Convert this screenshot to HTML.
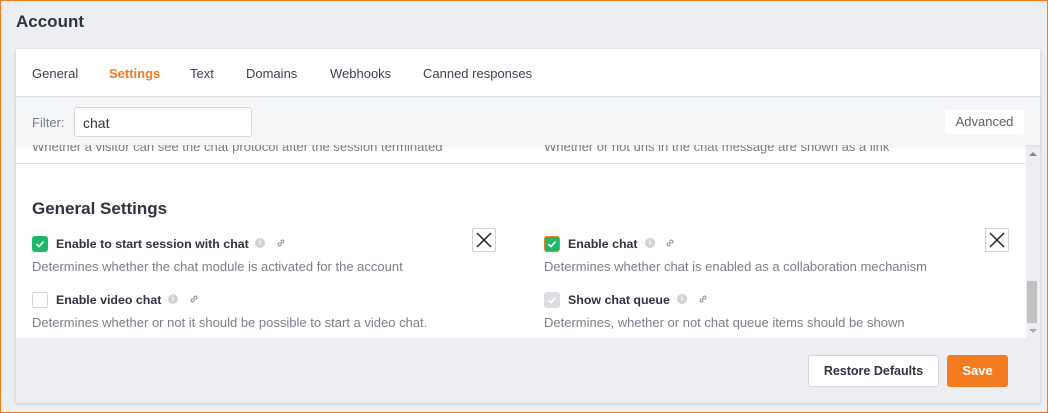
<!DOCTYPE html>
<html><head><meta charset="utf-8"><style>
*{box-sizing:border-box;margin:0;padding:0}
body{width:1048px;height:413px;background:#eceef1;font-family:"Liberation Sans",sans-serif;position:relative;overflow:hidden;color:#2e3440}
.frame{position:absolute;left:0;top:0;width:1048px;height:413px;border:1px solid #f47b20;pointer-events:none}
.a{position:absolute;white-space:nowrap}
.card{position:absolute;left:16px;top:49px;width:1024px;height:354px;background:#eceef1;box-shadow:0 1px 3px rgba(0,0,0,.15)}
.tab{font-size:13px;color:#3b4250;top:66px}
.desc{font-size:13px;color:#7a808a}
.lbl{font-size:12.4px;font-weight:bold;color:#2e3440;top:237px}
.cb{position:absolute;width:16px;height:16px;border-radius:3px}
.chk{background:#1fb86a}
.info{position:absolute;width:10px;height:10px;border-radius:50%;background:#cfd3d8;color:#fff;font-size:8px;text-align:center;line-height:10px;font-weight:bold}
.lk{position:absolute}
.x{position:absolute;width:24px;height:24px;border:1px solid #cfd3d8;border-radius:2px;background:#fff}
</style></head><body>
<div class="a" style="left:16px;top:12px;font-size:17px;font-weight:bold;color:#2e3440">Account</div>
<div class="card">
 <div style="position:absolute;left:0;top:0;width:1024px;height:48px;background:#fff;border-bottom:1px solid #dde0e4"></div>
 <div style="position:absolute;left:0;top:96px;width:1010px;height:193px;background:#fff;overflow:hidden">
  <div style="position:absolute;left:0;top:18px;width:1010px;border-top:1px solid #dde0e4"></div>
 </div>
 <div style="position:absolute;left:1010px;top:96px;width:14px;height:193px;background:#eceef1"></div>
 <div style="position:absolute;left:1011px;top:232px;width:10px;height:42px;background:#c1c1c1"></div>
</div>
<div class="a tab" style="left:32px">General</div>
<div class="a tab" style="left:109px;color:#f47b20;font-weight:bold">Settings</div>
<div class="a tab" style="left:190px">Text</div>
<div class="a tab" style="left:246px">Domains</div>
<div class="a tab" style="left:330px">Webhooks</div>
<div class="a tab" style="left:423px">Canned responses</div>
<div class="a desc" style="left:32px;top:139px;z-index:1;clip-path:inset(6px 0 0 0)">Whether a visitor can see the chat protocol after the session terminated</div>
<div class="a desc" style="left:544px;top:139px;z-index:1;clip-path:inset(6px 0 0 0)">Whether or not urls in the chat message are shown as a link</div>
<div style="position:absolute;left:16px;top:98px;width:1024px;height:47px;background:#f5f6f8;z-index:3;box-shadow:0 2px 3px rgba(0,0,0,.06)"></div>
<div class="a" style="left:32px;top:115px;font-size:13px;color:#7a808a;z-index:4">Filter:</div>
<div style="position:absolute;left:74px;top:107px;width:178px;height:30px;background:#fff;border:1px solid #d5d9de;border-radius:3px;z-index:4;font-size:14px;padding:7px 8px">chat</div>
<div style="position:absolute;left:945px;top:110px;width:79px;height:24px;background:#fff;border-radius:2px;z-index:4;font-size:13px;color:#5a606b;text-align:center;line-height:24px">Advanced</div>
<div style="position:absolute;left:1029px;top:152px;border:4px solid transparent;border-bottom:4px solid #888;border-top:0;width:0"></div>
<div style="position:absolute;left:1029px;top:329px;border:4px solid transparent;border-top:4px solid #aaa;border-bottom:0;width:0"></div>
<div class="a" style="left:32px;top:199px;font-size:17px;font-weight:bold">General Settings</div>

<div class="cb chk" style="left:32px;top:236px"><svg width="16" height="16"><path d="M4.5 8.2l2.5 2.4 4.5-5" stroke="#fff" stroke-width="1.6" fill="none"/></svg></div>
<div class="a lbl" style="left:56px">Enable to start session with chat</div>
<div class="info" style="left:255px;top:238px">i</div>
<svg class="lk" style="left:276px;top:238px" width="10" height="10"><path d="M4 6l2-2M3.5 4.5l-1 1a1.4 1.4 0 0 0 2 2l1-1M6.5 5.5l1-1a1.4 1.4 0 0 0-2-2l-1 1" stroke="#8a9099" stroke-width="1.1" fill="none"/></svg>
<div class="a desc" style="left:32px;top:259px">Determines whether the chat module is activated for the account</div>
<div class="x" style="left:472px;top:228px"><svg width="22" height="22"><path d="M4 4l14 14M18 4L4 18" stroke="#222" stroke-width="1.5"/></svg></div>

<div class="cb" style="left:32px;top:292px;border:1px solid #cfd3d8;background:#fff"></div>
<div class="a lbl" style="left:56px;top:293px">Enable video chat</div>
<div class="info" style="left:168px;top:294px">i</div>
<svg class="lk" style="left:189px;top:294px" width="10" height="10"><path d="M4 6l2-2M3.5 4.5l-1 1a1.4 1.4 0 0 0 2 2l1-1M6.5 5.5l1-1a1.4 1.4 0 0 0-2-2l-1 1" stroke="#8a9099" stroke-width="1.1" fill="none"/></svg>
<div class="a desc" style="left:32px;top:315px">Determines whether or not it should be possible to start a video chat.</div>

<div class="cb chk" style="left:544px;top:236px;border:1.5px solid #f47b20"><svg width="14" height="14"><path d="M3.5 7.2l2.5 2.4 4.5-5" stroke="#fff" stroke-width="1.6" fill="none"/></svg></div>
<div class="a lbl" style="left:568px">Enable chat</div>
<div class="info" style="left:645px;top:238px">i</div>
<svg class="lk" style="left:665px;top:238px" width="10" height="10"><path d="M4 6l2-2M3.5 4.5l-1 1a1.4 1.4 0 0 0 2 2l1-1M6.5 5.5l1-1a1.4 1.4 0 0 0-2-2l-1 1" stroke="#8a9099" stroke-width="1.1" fill="none"/></svg>
<div class="a desc" style="left:544px;top:259px">Determines whether chat is enabled as a collaboration mechanism</div>
<div class="x" style="left:985px;top:228px"><svg width="22" height="22"><path d="M4 4l14 14M18 4L4 18" stroke="#222" stroke-width="1.5"/></svg></div>

<div class="cb" style="left:544px;top:292px;background:#dadde1"><svg width="16" height="16"><path d="M4.5 8.2l2.5 2.4 4.5-5" stroke="#fff" stroke-width="1.6" fill="none"/></svg></div>
<div class="a lbl" style="left:568px;top:293px">Show chat queue</div>
<div class="info" style="left:677px;top:294px">i</div>
<svg class="lk" style="left:698px;top:294px" width="10" height="10"><path d="M4 6l2-2M3.5 4.5l-1 1a1.4 1.4 0 0 0 2 2l1-1M6.5 5.5l1-1a1.4 1.4 0 0 0-2-2l-1 1" stroke="#8a9099" stroke-width="1.1" fill="none"/></svg>
<div class="a desc" style="left:544px;top:315px">Determines, whether or not chat queue items should be shown</div>

<div style="position:absolute;left:808px;top:355px;width:131px;height:32px;background:#fff;border:1px solid #d5d9de;border-radius:3px;font-size:12.5px;font-weight:bold;text-align:center;line-height:30px;color:#2e3440">Restore Defaults</div>
<div style="position:absolute;left:947px;top:355px;width:61px;height:32px;background:#f47b20;border-radius:3px;font-size:13px;font-weight:bold;text-align:center;line-height:32px;color:#fff">Save</div>
<div class="frame"></div>
</body></html>
